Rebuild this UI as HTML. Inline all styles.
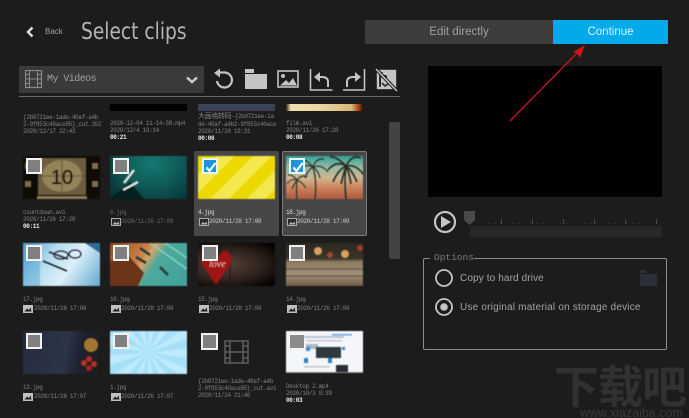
<!DOCTYPE html>
<html><head><meta charset="utf-8">
<style>
html,body{margin:0;padding:0;background:#1c1c1c}
#p{position:relative;width:689px;height:418px;overflow:hidden;background:#1c1c1c;font-family:"Liberation Sans","Noto Sans CJK SC",sans-serif}
#p>*{position:absolute}
.t{position:absolute;width:77px;height:43px;overflow:hidden;filter:blur(.5px)}
.t svg{position:absolute;left:0;top:0}
.c{position:absolute;width:12px;height:12px;border:2px solid #f2f2f2;background:#808080}
.c.on{background:#1a97d8;border-color:#e8f4fa}
.m{position:absolute;font-family:"Liberation Mono","Noto Sans CJK SC",monospace;font-size:6px;line-height:7px;letter-spacing:-.34px;color:#808080;white-space:nowrap;filter:blur(.3px)}
.d{color:#eee;font-weight:bold}
.card{background:#474747;border-radius:2px}
</style></head><body><div id="p">
<svg style="left:25px;top:26px" width="10" height="12"><path d="M7.500 1.500 3 6l4.500 4.500" fill="none" stroke="#ddd" stroke-width="2.400"/></svg>
<div style="left:45px;top:27px;font-size:8px;color:#a0a0a0;line-height:10px">Back</div>
<div style="left:81px;top:17px;font-size:23px;line-height:30px;color:#b4b4b4;font-family:'DejaVu Sans',sans-serif;white-space:nowrap;transform-origin:0 50%;transform:scaleX(.81)">Select clips</div>

<div style="left:365px;top:20px;width:188px;height:24px;background:#3c3c3c;color:#a0a0a0;font-size:11.500px;line-height:24px;text-align:center">Edit directly</div>
<div style="left:553px;top:20px;width:115px;height:24px;background:#03aaea;color:#d8f3ff;font-size:11.500px;line-height:24px;text-align:center">Continue</div>

<div style="left:19px;top:66px;width:185px;height:27px;background:#3a3a3a"></div>
<svg style="left:25px;top:70px" width="18" height="19" fill="none" stroke="#8a8a8a"><rect x=".5" y=".5" width="16" height="17" stroke-width="1.200"/><path d="M4.500.5v17M12.500.5v17M4.500 9h8M.5 4.500h4M.5 9h4M.5 13.500h4M12.500 4.500h4M12.500 9h4M12.500 13.500h4"/></svg>
<div style="left:47px;top:73px;font-family:'Liberation Mono',monospace;font-size:10px;letter-spacing:-.55px;line-height:14px;color:#a0a0a0">My Videos</div>
<svg style="left:185px;top:75px" width="14" height="10"><path d="M2 2.500 7 7l5-4.500" fill="none" stroke="#d0d0d0" stroke-width="2.400"/></svg>
<div style="left:19px;top:96px;width:381px;height:1px;background:#6a6a6a"></div>

<svg style="left:212px;top:67px" width="24" height="24" fill="none" stroke="#c4c4c4"><path d="M6 5.500h6.500a7.500 7.500 0 1 1-7.500 8.500" stroke-width="2.200"/><path d="M2 6 8 1.500v9z" fill="#c4c4c4" stroke="none"/></svg>
<svg style="left:245px;top:69px" width="23" height="21" fill="#c4c4c4"><rect x="0" y="0" width="9" height="4"/><rect x="0" y="5" width="22" height="15"/></svg>
<svg style="left:277px;top:70px" width="23" height="19"><rect x="1" y="1" width="20" height="16" fill="none" stroke="#c4c4c4" stroke-width="1.600"/><circle cx="6" cy="6" r="2" fill="#c4c4c4"/><path d="M3 15.500 9 10l3 3 4-5 4 7.500z" fill="#c4c4c4"/></svg>
<svg style="left:309px;top:68px" width="24" height="24" fill="none" stroke="#c4c4c4"><path d="M1.500 1v21h22" stroke-width="1.600"/><path d="M19 19v-5q0-5-6-5H9" stroke-width="2"/><path d="M5 9l6-5v10z" fill="#c4c4c4" stroke="none"/></svg>
<svg style="left:342px;top:68px" width="24" height="24" fill="none" stroke="#c4c4c4"><path d="M22.500 1v21H1" stroke-width="1.600"/><path d="M5 19v-5q0-5 6-5h4" stroke-width="2"/><path d="M19 9l-6-5v10z" fill="#c4c4c4" stroke="none"/></svg>
<svg style="left:375px;top:68px" width="23" height="24"><rect x="3" y="3" width="17" height="17" fill="none" stroke="#c4c4c4" stroke-width="2.400"/><path d="M8 4h13v16H6V10z" fill="#c4c4c4"/><circle cx="10" cy="9" r="2" fill="#1c1c1c"/><path d="M7 15l3 3 6-4" fill="none" stroke="#333" stroke-width="1.800"/><path d="M1 1l21 22" stroke="#1c1c1c" stroke-width="3.500"/><path d="M1 1l21 22" stroke="#c4c4c4" stroke-width="1.500"/></svg>

<div class="card" style="left:194px;top:151px;width:85px;height:85px"></div>
<div class="card" style="left:282px;top:151px;width:83px;height:83px;border:1px solid #7a7a7a"></div>

<!-- row 1 -->
<div style="left:110px;top:104px;width:77px;height:7px;background:#000"></div>
<div style="left:198px;top:104px;width:77px;height:7px;background:#3b4256"></div>
<div style="left:286px;top:104px;width:77px;height:7px;background:linear-gradient(90deg,#3a1a08 0,#f0dfb0 6%,#e8d49c 50%,#d6b878 85%,#a03c10 95%,#2a1006 100%)"></div>
<div class="m" style="left:23px;top:114px">{2b0721ee-1ade-40af-a4b<br>2-9f853c40ace85}_cut.352<br>2020/12/17 22:43</div>
<div class="m" style="left:110px;top:120px">2020-12-04 11-14-38.mp4<br>2020/12/4 19:14<br><span class="d">00:21</span></div>
<div class="m" style="left:198px;top:113px"><span style="font-size:7px">大画格转码</span>-{2b0721ee-1a<br>de-40af-a4b2-9f853c40ace<br>2020/11/28 19:31<br><span class="d">00:06</span></div>
<div class="m" style="left:286px;top:120px">film.avi<br>2020/11/26 17:28<br><span class="d">00:08</span></div>

<!-- row 2 -->
<div class="t" style="left:23px;top:156px"><svg width="77" height="43"><rect width="77" height="43" fill="#0f0c08"/><rect x="15" y="2" width="48" height="37" fill="#6c5e3e"/><ellipse cx="39" cy="20" rx="20" ry="16" fill="#94845a"/><path d="M15 20H63M39 2V39" stroke="#54482e" stroke-width=".7"/><rect x="2" y="7" width="6" height="6" fill="#7c6c48"/><rect x="2" y="25" width="6" height="6" fill="#7c6c48"/><rect x="69" y="7" width="6" height="6" fill="#7c6c48"/><rect x="69" y="25" width="6" height="6" fill="#7c6c48"/><rect x="14" y="40" width="50" height="3" fill="#8c7c58"/><text x="39" y="28" font-size="20" text-anchor="middle" fill="#1c160c" font-family="Liberation Sans">10</text></svg></div>
<div class="c" style="left:26px;top:158px"></div>
<div class="m" style="left:23px;top:209px">countdown.avi<br>2020/11/26 17:20<br><span class="d">00:11</span></div>

<div class="t" style="left:110px;top:156px;background:radial-gradient(ellipse at 55% 15%,#157a72 0,#0e5855 50%,#082a2c 100%)"><svg width="77" height="43"><path d="M0 43 20 26 34 43z" fill="#06201f"/><path d="M13 34 28 26" stroke="#e4e4e4" stroke-width="2.500"/><path d="M14 27 24 14" stroke="#e4e4e4" stroke-width="2.500"/></svg></div>
<div class="c" style="left:113px;top:158px"></div>
<div class="m" style="left:110px;top:209px;color:#666">6.jpg</div>
<div class="m" style="left:121px;top:218px;color:#666">2020/11/26 17:09</div>

<div class="t" style="left:198px;top:156px;background:repeating-linear-gradient(135deg,#ecd900 0,#ecd900 13px,#f3e850 13px,#f3e850 26px)"></div>
<div class="c on" style="left:202px;top:158px"></div>
<svg style="left:205px;top:161px" width="12" height="12"><path d="M1.500 6.500 4.500 10 10.500 2" fill="none" stroke="#fff" stroke-width="2.200"/></svg>
<div class="m" style="left:198px;top:209px;color:#ddd">4.jpg</div>
<div class="m" style="left:209px;top:218px;color:#ccc">2020/11/28 17:08</div>

<div class="t" style="left:286px;top:156px;background:linear-gradient(180deg,#2fa39a 0,#9cbca4 28%,#d0b490 52%,#c87c54 78%,#ac5a3e 100%)"><svg width="77" height="43" fill="none" stroke="#2a3024"><path d="M29 43Q31 25 27 11" stroke-width="1.300"/><path d="M60 43Q58 25 60 10" stroke-width="1.600"/><path d="M11 43Q10 32 11 24" stroke-width="1.200"/><path d="M27 11Q18 7 12 14M27 11Q20 3 14 3M27 11Q30 2 38 3M27 11Q36 8 42 16M27 11Q22 14 19 22M27 11Q32 14 34 22" stroke-width="1.200"/><path d="M60 10Q50 4 42 14M60 10Q50 0 44 1M60 10Q66-2 75 2M60 10Q70 8 77 18M60 10Q52 14 47 26M60 10Q66 14 71 26M60 10Q58 16 55 28M60 10Q63 16 65 28" stroke-width="1.700"/><path d="M11 24Q5 22 1 28M11 24Q6 18 2 19M11 24Q16 18 21 21M11 24Q16 26 20 32M11 24Q8 28 6 33" stroke-width="1.100"/></svg></div>
<div class="c on" style="left:289px;top:158px"></div>
<svg style="left:292px;top:161px" width="12" height="12"><path d="M1.500 6.500 4.500 10 10.500 2" fill="none" stroke="#fff" stroke-width="2.200"/></svg>
<div class="m" style="left:286px;top:209px;color:#ddd">18.jpg</div>
<div class="m" style="left:297px;top:218px;color:#ccc">2020/11/28 17:09</div>

<!-- row 3 -->
<div class="t" style="left:23px;top:243px;background:linear-gradient(125deg,#4a9ccc 0,#b8def0 35%,#dcf0f8 60%,#62a8d0 100%)"><svg width="77" height="43"><path d="M26 9 45 16" stroke="#223" stroke-width="1.500"/><ellipse cx="38" cy="12" rx="7" ry="4" fill="none" stroke="#223" stroke-width="1.200"/><ellipse cx="52" cy="11" rx="6" ry="4" fill="none" stroke="#223" stroke-width="1.200"/><path d="M20 18 44 28" stroke="#123" stroke-width="1.500"/><path d="M62 0 77 10V0z" fill="#2f6c98"/><path d="M0 0H17V43H0z" fill="#5aa8d4" opacity=".5"/></svg></div>
<div class="c" style="left:26px;top:245px"></div>
<div class="m" style="left:23px;top:296px">17.jpg</div>
<div class="m" style="left:34px;top:305px">2020/11/26 17:08</div>

<div class="t" style="left:110px;top:243px;background:linear-gradient(125deg,#8c4a24 0,#cc8448 38%,#d8a468 44%,#4ea89c 56%,#3fa49a 100%)"><svg width="77" height="43"><path d="M0 18 16 10 34 30 28 43H0z" fill="#6c3418"/><path d="M30 5 40 12M50 24 58 32M26 14 36 20" stroke="#2a3a34" stroke-width="2.500"/><path d="M40 0 77 26M55 0 77 15" stroke="#8ed0c4" stroke-width="1.500"/></svg></div>
<div class="c" style="left:113px;top:245px"></div>
<div class="m" style="left:110px;top:296px">16.jpg</div>
<div class="m" style="left:121px;top:305px">2020/11/28 17:08</div>

<div class="t" style="left:198px;top:243px;background:radial-gradient(ellipse at 35% 50%,#54443a 0,#30241e 50%,#050302 90%)"><svg width="77" height="43"><path d="M22 0V43M32 0V43" stroke="#201610" stroke-width="1"/><path d="M18 42 3 20Q3 9 14 11 19 12 20 16 22 8 29 8 34 10 33 20z" fill="#a01414"/><text x="11" y="24" font-size="10" fill="#eee" font-family="Liberation Serif" font-style="italic">love</text></svg></div>
<div class="c" style="left:202px;top:245px"></div>
<div class="m" style="left:198px;top:296px">15.jpg</div>
<div class="m" style="left:209px;top:305px">2020/11/28 17:08</div>

<div class="t" style="left:286px;top:243px;background:linear-gradient(180deg,#2b2a20 0,#3a3528 36%,#8c7c60 44%,#a09078 75%,#6c5c48 100%)"><svg width="77" height="43"><circle cx="32" cy="8" r="4" fill="#d8a060"/><circle cx="44" cy="12" r="3" fill="#a04a30"/><circle cx="59" cy="11" r="4" fill="#d8a060"/><circle cx="74" cy="5" r="3" fill="#a83830"/><path d="M0 26H77M0 33H77" stroke="#5a4c3c"/></svg></div>
<div class="c" style="left:289px;top:245px"></div>
<div class="m" style="left:286px;top:296px">14.jpg</div>
<div class="m" style="left:297px;top:305px">2020/11/26 17:08</div>

<!-- row 4 -->
<div class="t" style="left:23px;top:331px;background:linear-gradient(100deg,#252c3c 0,#2c3448 55%,#1e2230 72%,#201c18 100%)"><svg width="77" height="43"><circle cx="68" cy="14" r="7" fill="#a07830"/><circle cx="66" cy="28" r="3" fill="#b82820"/><circle cx="61" cy="32" r="3" fill="#c03020"/><circle cx="71" cy="33" r="3" fill="#b82820"/><circle cx="66" cy="37" r="3" fill="#a82018"/></svg></div>
<div class="c" style="left:26px;top:333px"></div>
<div class="m" style="left:23px;top:384px">13.jpg</div>
<div class="m" style="left:34px;top:393px">2020/11/26 17:07</div>

<div class="t" style="left:110px;top:331px;background:repeating-conic-gradient(from 0deg at 50% 50%,#bdeafc 0 14deg,#a6e0f8 14deg 28deg)"></div>
<div class="c" style="left:113px;top:333px"></div>
<div class="m" style="left:110px;top:384px">1.jpg</div>
<div class="m" style="left:121px;top:393px">2020/11/26 17:07</div>

<div class="c" style="left:201px;top:333px;width:13px;height:13px"></div>
<svg style="left:224px;top:340px" width="25" height="24" fill="none" stroke="#5e5e5e" stroke-width="1.500"><rect x="1" y="1" width="23" height="22"/><path d="M6 1v22M19 1v22M6 12h13M1 6h5M1 12h5M1 18h5M19 6h5M19 12h5M19 18h5"/></svg>
<div class="m" style="left:198px;top:378px">{2b0721ee-1ade-40af-a4b<br>2-9f853c40ace85}_cut.avi<br>2020/11/24 21:46</div>

<div class="t" style="left:286px;top:331px;height:42px;background:#f4f6fa"><svg width="77" height="42"><rect x="18" y="5" width="40" height="2" fill="#b8c4d4"/><rect x="46" y="3" width="20" height="1.500" fill="#6ea8e0"/><rect x="20" y="9" width="36" height="1.500" fill="#c8c8d0"/><rect x="20" y="13" width="12" height="5" fill="#b0b8c8"/><rect x="20" y="16" width="4" height="4" fill="#3c88c8"/><rect x="30" y="16" width="25" height="11" fill="#2e3a40"/><rect x="56" y="16" width="3" height="3" fill="#3c88c8"/><rect x="18" y="27" width="4" height="5" fill="#2c80c8"/><rect x="42" y="27" width="4" height="5" fill="#2c80c8"/><rect x="50" y="34" width="12" height="8" fill="#2a2e34"/><rect x="18" y="35" width="26" height="1.500" fill="#c0c4cc"/><rect x="0" y="41" width="77" height="1" fill="#888"/></svg></div>
<div class="c" style="left:290px;top:335px;width:14px;height:13px;border:0;background:#8c8c8c"></div>
<div class="m" style="left:286px;top:383px">Desktop 2.mp4<br>2020/10/3 0:39<br><span class="d">00:03</span></div>

<!-- small image icons -->
<svg style="left:0;top:0;width:689px;height:418px;pointer-events:none" fill="none">
<defs><g id="i"><rect x=".5" y=".5" width="9" height="7" fill="#2a2a2a" stroke="#aaa"/><path d="M1.500 6.500 4 4l2 1.500L7.500 3.500l1 3z" fill="#bbb"/></g>
<g id="j"><rect x="0" y="0" width="10" height="8" fill="#c0c0c0"/><path d="M1.500 6.500 4 3.500l2 1.500 1.500-2.500 1 4z" fill="#222"/></g></defs>
<use href="#i" x="111" y="218"/><use href="#i" x="199" y="218"/><use href="#i" x="287" y="218"/>
<use href="#j" x="23" y="305"/><use href="#j" x="111" y="305"/><use href="#j" x="199" y="305"/><use href="#j" x="287" y="305"/>
<use href="#j" x="23" y="393"/><use href="#j" x="111" y="393"/>
</svg>

<div style="left:389px;top:122px;width:11px;height:137px;background:#434343;border-radius:2px"></div>

<div style="left:428px;top:66px;width:234px;height:131px;background:#000"></div>

<svg style="left:500px;top:38px" width="95" height="90"><path d="M10 83 77 15" stroke="#c4161c" stroke-width="1.300"/><path d="M85 7 73 14 77 15 80 20z" fill="#d0141a"/></svg>

<svg style="left:433px;top:210px" width="24" height="24"><circle cx="12" cy="12" r="10" fill="none" stroke="#c4c4c4" stroke-width="2.200"/><path d="M8 6 18 12 8 18z" fill="#c4c4c4"/></svg>
<svg style="left:462px;top:209px" width="202" height="30"><path d="M2 2h11v9l-5.500 5L2 11z" fill="#4a4a4a"/><rect x="8" y="17" width="192" height="11" fill="#272727"/><path d="M20 14.500H196" stroke="#3e3e3e" stroke-dasharray="1 5"/><g stroke="#484848"><path d="M39.500 10v5M70.500 10v5M101.500 10v5M132.500 10v5M163.500 10v5M194.500 10v5"/></g></svg>

<div style="left:423px;top:258px;width:242px;height:90px;border:1px solid #8c8c8c;border-radius:2px"></div>
<div style="left:430px;top:252px;width:40px;height:12px;background:#1c1c1c;padding-left:4px;font-family:'Liberation Mono',monospace;font-size:9.500px;line-height:12px;color:#7c7c7c">Options</div>
<svg style="left:434px;top:268px" width="20" height="50" fill="none"><circle cx="10" cy="10" r="8" stroke="#c4c4c4" stroke-width="1.800"/><circle cx="10" cy="39" r="8" stroke="#c4c4c4" stroke-width="1.800"/><circle cx="10" cy="39" r="3.800" fill="#c4c4c4"/></svg>
<div style="left:460px;top:272px;font-size:10px;line-height:14px;color:#a4a4a4;letter-spacing:.12px">Copy to hard drive</div>
<div style="left:460px;top:301px;font-size:10px;line-height:14px;color:#a4a4a4;letter-spacing:.2px">Use original material on storage device</div>
<svg style="left:640px;top:270px" width="17" height="16" fill="#2b2f38"><rect width="6" height="3"/><rect y="4" width="17" height="12"/></svg>

<div style="left:554px;top:355px;font-size:45px;line-height:58px;font-weight:bold;color:#313131;letter-spacing:-1px;white-space:nowrap;font-family:'Noto Sans CJK SC',sans-serif">下载吧</div>
<div style="left:580px;top:407px;font-size:12.500px;line-height:12px;color:#3a3a3a;white-space:nowrap">www.xiazaiba.com</div>
</div></body></html>
